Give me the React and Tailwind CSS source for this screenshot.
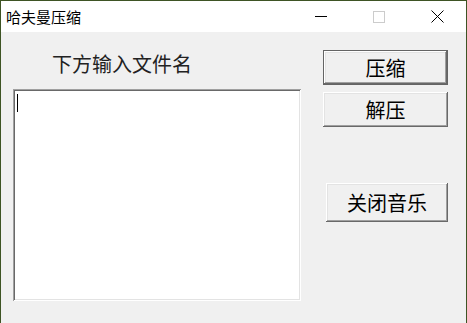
import React from 'react';

const raised =
  'shadow-[inset_-1px_-1px_#696969,inset_1px_1px_#ffffff,inset_-2px_-2px_#a0a0a0,inset_2px_2px_#e3e3e3]';

const App = () => {
  return (
    <div className="w-[467px] h-[323px] bg-[#3e5424] pt-px px-px overflow-hidden font-['Noto_Sans_CJK_SC',sans-serif]">
      <div className="w-[465px] h-[322px] flex flex-col bg-[#f0f0f0]">
        {/* title bar */}
        <div className="h-[31px] bg-white flex items-center">
          <div className="flex-1 pl-[5px] text-[15px] leading-[31px] text-black">哈夫曼压缩</div>
          <div className="w-[58px] h-[31px] flex items-center justify-center">
            <div className="w-[12px] h-px bg-black" />
          </div>
          <div className="w-[58px] h-[31px] flex items-center justify-center">
            <div className="w-[12px] h-[12px] border border-[#cccccc]" />
          </div>
          <div className="w-[58px] h-[31px] flex items-center justify-center">
            <svg width="13" height="13" viewBox="0 0 13 13">
              <path d="M0.5 0.5 L12.5 12.5 M12.5 0.5 L0.5 12.5" stroke="#000" strokeWidth="1" />
            </svg>
          </div>
        </div>

        {/* client area */}
        <div className="flex flex-1">
          <div className="ml-[12px] w-[288px] flex flex-col">
            <div className="mt-[20px] h-[24px] leading-[24px] pl-[39px] text-[20px] text-[#222222]">
              下方输入文件名
            </div>
            <div className="mt-[13px] w-[288px] h-[212px] bg-white shadow-[inset_1px_1px_#a0a0a0,inset_-1px_-1px_#ffffff,inset_2px_2px_#696969,inset_-2px_-2px_#e3e3e3] pt-[5px] pl-[4px]">
              <div className="w-px h-[18px] bg-black" />
            </div>
          </div>

          <div className="ml-[22px] flex flex-col">
            <button className="mt-[18px] w-[125px] h-[35px] border border-[#646464] bg-[#f0f0f0] text-[20px] leading-none text-black flex items-center justify-center">
              <span className={`w-full h-full flex items-center justify-center ${raised}`}>压缩</span>
            </button>
            <button className={`mt-[7px] w-[125px] h-[35px] bg-[#f0f0f0] text-[20px] leading-none text-black flex items-center justify-center ${raised}`}>
              解压
            </button>
            <button className={`mt-[56px] ml-[3px] w-[122px] h-[39px] bg-[#f0f0f0] text-[20px] leading-none text-black flex items-center justify-center ${raised}`}>
              关闭音乐
            </button>
          </div>
        </div>
      </div>
    </div>
  );
};

export default App;
